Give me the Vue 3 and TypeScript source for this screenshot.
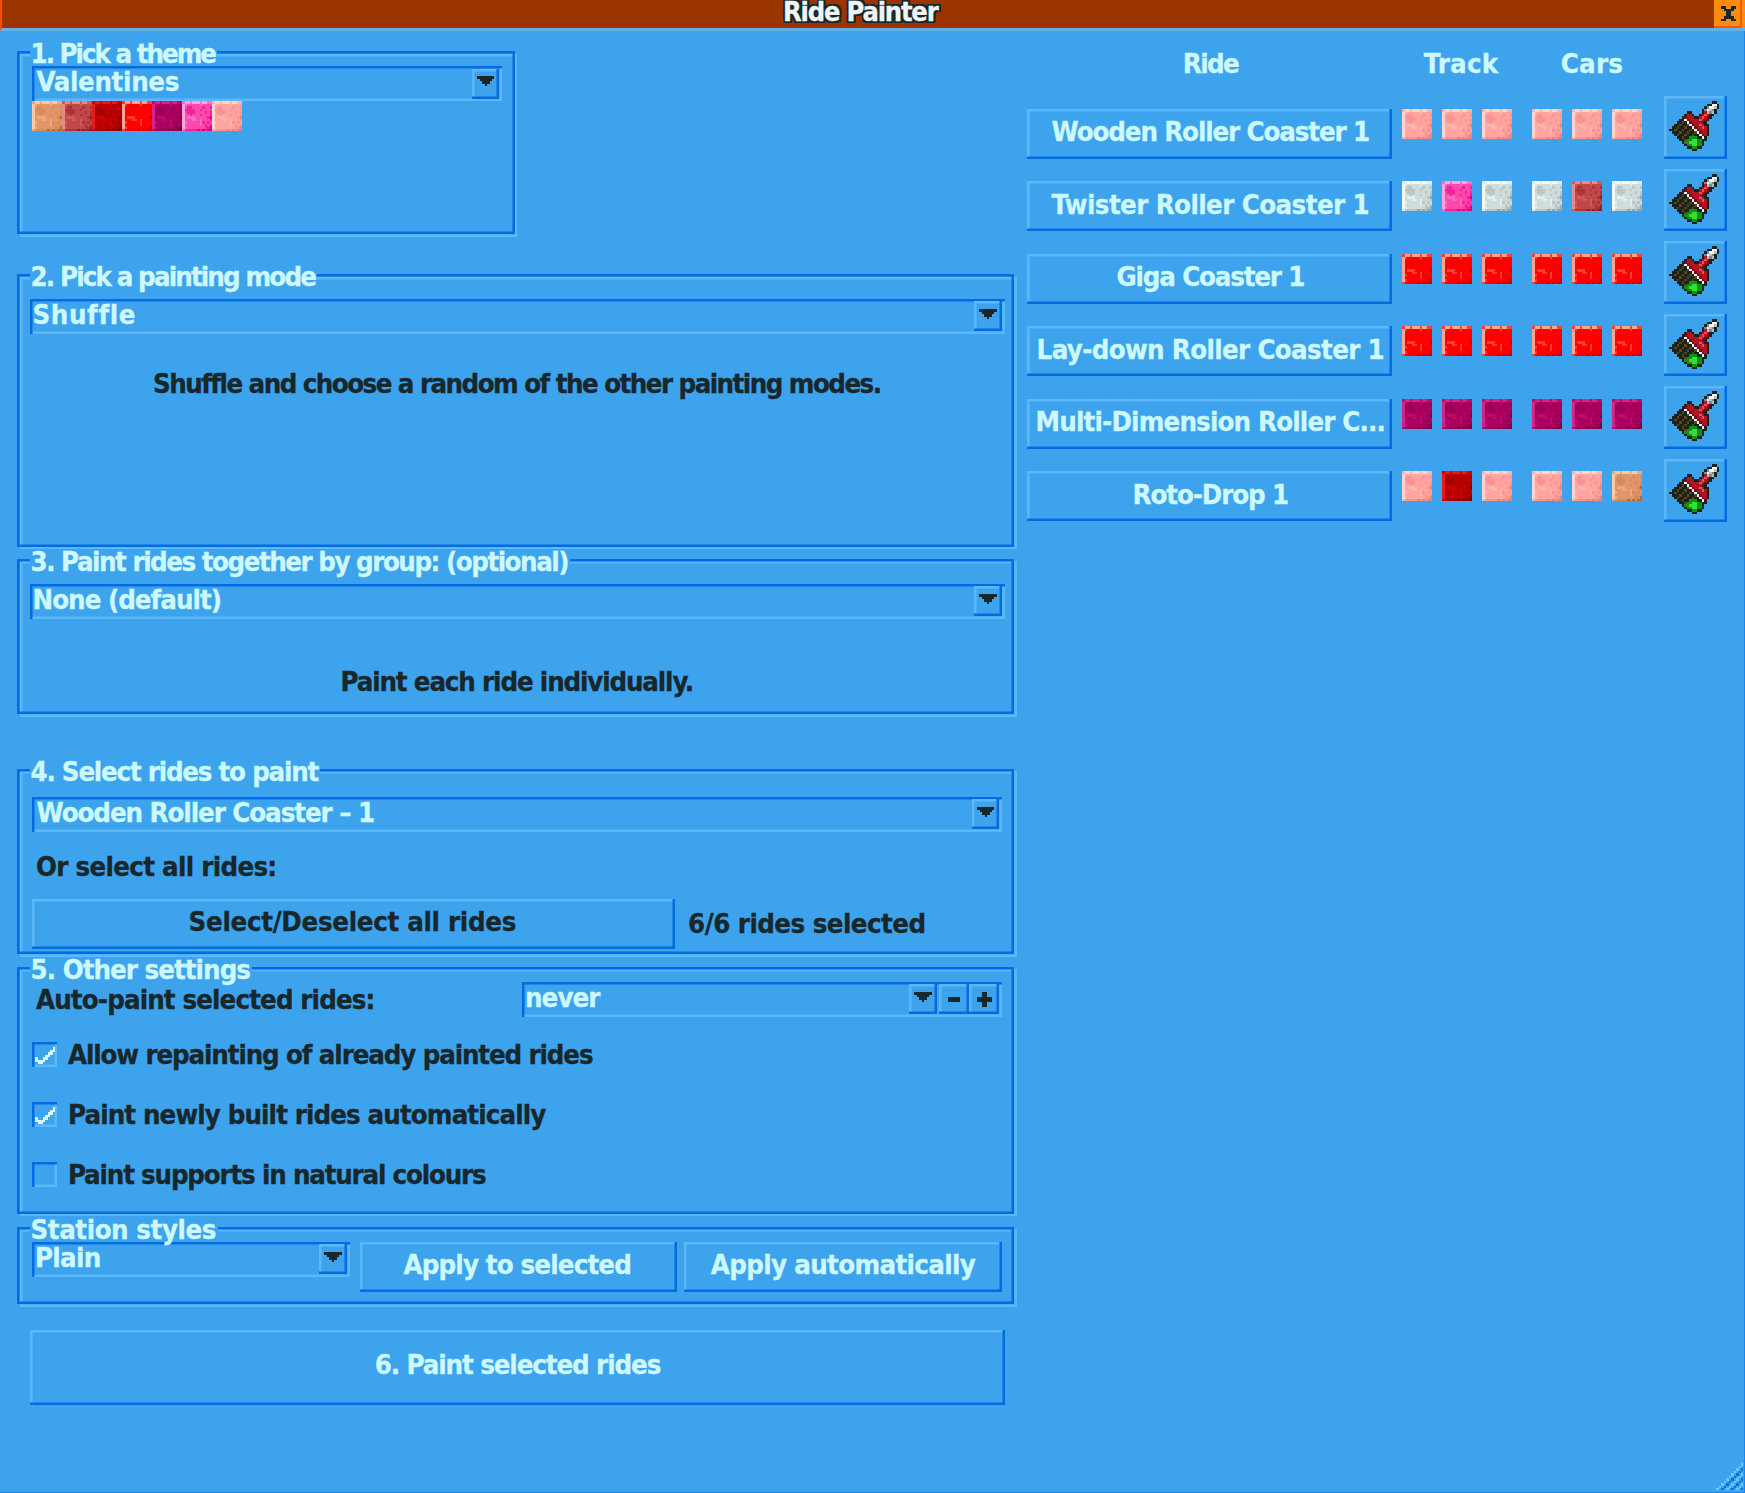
<script setup lang="ts">
import { defineComponent, h } from 'vue'

type Shades = [string, string, string, string, string]

// Shades run from highlight to deepest shadow.
const paints: Record<string, Shades> = {
  tan: ['#fbc9a4', '#eaaa7e', '#e09668', '#d98a5c', '#b8683f'],
  rose: ['#e58a8a', '#cc5c5c', '#c04848', '#ab3438', '#8c2228'],
  crimson: ['#e01c1c', '#c80404', '#bc0000', '#a40000', '#7c0000'],
  red: ['#ffa494', '#ff3c30', '#ff0000', '#f60000', '#cc0000'],
  purple: ['#d4248c', '#b80c68', '#ac0060', '#980054', '#780040'],
  pink: ['#ffa4dc', '#ff6cc0', '#ff48ac', '#f4209c', '#cc0c7c'],
  salmon: ['#ffd4d0', '#ffb4ac', '#ffa4a0', '#fa9490', '#e68480'],
  white: ['#f4f8f8', '#e4ecec', '#d0dcdc', '#b8c6c6', '#98a8a8'],
}

const swatchRows = [
  '100100010011',
  '012222212222',
  '023322223223',
  '033332232222',
  '023332222323',
  '022322232223',
  '021112222234',
  '022211212223',
  '012222213232',
  '022222212323',
  '012222222334',
  '133333434344',
]

const brushRows = [
  '.................KK.',
  '...............KKWWK',
  '..............KgWWGK',
  '.............KgWGgK.',
  '.......KK....KRGgGK.',
  '......KRRK..KRPRKK..',
  '.....KDRRRKKRPRDK...',
  '....KKWDRRRRPRDK....',
  '...KKBKWDRRRRDK.....',
  '..KKBKKBWDRRPRKK....',
  '.KKBKKBKKWDRRPRK....',
  'KKBKKBKKBKWDRRRK....',
  '.KKKBKKBKKBWDRRK....',
  '..KBKKBKKBKKWDRK....',
  '...KKBKKNNNKKWK.....',
  '....KKBNNLLNNKK.....',
  '.....KNNLLLNNK......',
  '......KNNLLNNK......',
  '.......KKNNKK.......',
  '.........KK.........',
]
const brushInk: Record<string, string> = {
  K: '#17231f', W: '#f0f4f4', G: '#b4c0c0', g: '#7c8c8c', R: '#b01420',
  P: '#e45460', D: '#780c14', B: '#63400f', N: '#0a9410', L: '#38dc3c',
}

const arrowRows = ['KKKKKKK', '.KKKKK.', '..KKK..', '...K...']
const tickRows = ['.......W', '......WW', '.....WW.', '....WW..', 'W..WW...', 'WWWW....', '.WW.....']
const closeRows = ['KK..KK', '.KKKK.', '..KK..', '..KK..', '.KKKK.', 'KK..KK']
const minusRows = ['KKKKK', 'KKKKK']
const plusRows = ['..KK..', '..KK..', 'KKKKKK', 'KKKKKK', '..KK..', '..KK..']
const lineInk = { K: '#17272b', W: '#d8f8ff' }

const gripRows = Array.from({ length: 11 }, (_, r) =>
  Array.from({ length: 11 }, (_, c) => {
    const s = c + r - 10
    return s < 0 || s % 2 ? '.' : s % 4 ? 'D' : 'L'
  }).join(''),
)
const gripInk = { L: '#6cc8fc', D: '#0a70e4' }

const Sprite = defineComponent({
  props: {
    rows: { type: Array as () => string[], required: true },
    ink: { type: Object as () => Record<string, string>, required: true },
  },
  setup(props) {
    return () => {
      const w = props.rows[0].length
      const cells = props.rows.flatMap((row, y) =>
        [...row].flatMap((c, x) =>
          props.ink[c] ? [h('rect', { x, y, width: 1, height: 1, fill: props.ink[c] })] : [],
        ),
      )
      return h(
        'svg',
        {
          width: w * 2.5,
          height: props.rows.length * 2.5,
          viewBox: `0 0 ${w} ${props.rows.length}`,
          'shape-rendering': 'crispEdges',
          style: 'display:block;flex:none',
        },
        cells,
      )
    }
  },
})

const shadeInk = (name: string) =>
  Object.fromEntries(paints[name].map((c, i) => [String(i), c])) as Record<string, string>

// Tracks a label's letters so that it takes up the given width.
const vFit = {
  mounted(el: HTMLElement, { value }: { value: number }) {
    const n = (el.textContent ?? '').length
    const natural = el.getBoundingClientRect().width
    el.style.letterSpacing = `${(value + 1.5 - natural) / n}px`
  },
}

const theme = ['tan', 'rose', 'crimson', 'red', 'purple', 'pink', 'salmon']

const rides = [
  { name: 'Wooden Roller Coaster 1', w: 316, track: ['salmon', 'salmon', 'salmon'], cars: ['salmon', 'salmon', 'salmon'] },
  { name: 'Twister Roller Coaster 1', w: 316, track: ['white', 'pink', 'white'], cars: ['white', 'rose', 'white'] },
  { name: 'Giga Coaster 1', w: 186, track: ['red', 'red', 'red'], cars: ['red', 'red', 'red'] },
  { name: 'Lay-down Roller Coaster 1', w: 346, track: ['red', 'red', 'red'], cars: ['red', 'red', 'red'] },
  { name: 'Multi-Dimension Roller C...', w: 348, track: ['purple', 'purple', 'purple'], cars: ['purple', 'purple', 'purple'] },
  { name: 'Roto-Drop 1', w: 154, track: ['salmon', 'crimson', 'salmon'], cars: ['salmon', 'salmon', 'tan'] },
]

const options = [
  { text: 'Allow repainting of already painted rides', w: 523, on: true },
  { text: 'Paint newly built rides automatically', w: 476, on: true },
  { text: 'Paint supports in natural colours', w: 416, on: false },
]
</script>

<template>
  <div class="window">
    <header class="titlebar">
      <h1 class="title"><span v-fit="153">Ride Painter</span></h1>
      <div class="close"><Sprite :rows="closeRows" :ink="lineInk" /></div>
    </header>

    <main class="body">
      <section class="left">
        <div class="group theme">
          <div class="legend"><span v-fit="183">1. Pick a theme</span></div>
          <div class="drop">
            <div class="value"><span v-fit="141">Valentines</span></div>
            <div class="btn knob"><Sprite :rows="arrowRows" :ink="lineInk" /></div>
          </div>
          <div class="palette">
            <Sprite v-for="p in theme" :key="p" :rows="swatchRows" :ink="shadeInk(p)" />
          </div>
        </div>

        <div class="group mode">
          <div class="legend"><span v-fit="283">2. Pick a painting mode</span></div>
          <div class="drop wide">
            <div class="value"><span v-fit="102">Shuffle</span></div>
            <div class="btn knob"><Sprite :rows="arrowRows" :ink="lineInk" /></div>
          </div>
          <p class="note"><span v-fit="726">Shuffle and choose a random of the other painting modes.</span></p>
        </div>

        <div class="group together">
          <div class="legend"><span v-fit="536">3. Paint rides together by group: (optional)</span></div>
          <div class="drop wide">
            <div class="value"><span v-fit="187">None (default)</span></div>
            <div class="btn knob"><Sprite :rows="arrowRows" :ink="lineInk" /></div>
          </div>
          <p class="note low"><span v-fit="351">Paint each ride individually.</span></p>
        </div>

        <div class="group select">
          <div class="legend"><span v-fit="286">4. Select rides to paint</span></div>
          <div class="drop">
            <div class="value"><span v-fit="336">Wooden Roller Coaster – 1</span></div>
            <div class="btn knob"><Sprite :rows="arrowRows" :ink="lineInk" /></div>
          </div>
          <div class="label"><span v-fit="239">Or select all rides:</span></div>
          <div class="row all">
            <div class="btn text dark"><span v-fit="326">Select/Deselect all rides</span></div>
            <div class="count"><span v-fit="236">6/6 rides selected</span></div>
          </div>
        </div>

        <div class="group other">
          <div class="legend"><span v-fit="218">5. Other settings</span></div>
          <div class="row auto">
            <div class="autolabel"><span v-fit="337">Auto-paint selected rides:</span></div>
            <div class="drop">
              <div class="value"><span v-fit="73">never</span></div>
              <div class="btn knob"><Sprite :rows="arrowRows" :ink="lineInk" /></div>
              <div class="btn step first"><Sprite :rows="minusRows" :ink="lineInk" /></div>
              <div class="btn step"><Sprite :rows="plusRows" :ink="lineInk" /></div>
            </div>
          </div>
          <div class="options">
            <div v-for="o in options" :key="o.text" class="option">
              <div class="box"><Sprite v-if="o.on" :rows="tickRows" :ink="lineInk" /></div>
              <span v-fit="o.w">{{ o.text }}</span>
            </div>
          </div>
        </div>

        <div class="group station">
          <div class="legend"><span v-fit="184">Station styles</span></div>
          <div class="row styles">
            <div class="drop">
              <div class="value"><span v-fit="64">Plain</span></div>
              <div class="btn knob"><Sprite :rows="arrowRows" :ink="lineInk" /></div>
            </div>
            <div class="btn text"><span v-fit="226">Apply to selected</span></div>
            <div class="btn text"><span v-fit="263">Apply automatically</span></div>
          </div>
        </div>

        <div class="btn paint"><span v-fit="284">6. Paint selected rides</span></div>
      </section>

      <section class="right">
        <div class="heads">
          <div><span v-fit="54">Ride</span></div>
          <div><span v-fit="73">Track</span></div>
          <div><span v-fit="61">Cars</span></div>
        </div>
        <div v-for="r in rides" :key="r.name" class="ride">
          <div class="btn text"><span v-fit="r.w">{{ r.name }}</span></div>
          <div class="colours">
            <Sprite v-for="(p, i) in r.track" :key="i" :rows="swatchRows" :ink="shadeInk(p)" />
          </div>
          <div class="colours cars">
            <Sprite v-for="(p, i) in r.cars" :key="i" :rows="swatchRows" :ink="shadeInk(p)" />
          </div>
          <div class="btn brush"><Sprite :rows="brushRows" :ink="brushInk" /></div>
        </div>
      </section>
    </main>

    <div class="grip"><Sprite :rows="gripRows" :ink="gripInk" /></div>
  </div>
</template>

<style>
body {
  margin: 0;
  background: #3da3ed;
}
</style>

<style scoped>
.window {
  --bg: #3da3ed;
  --lo: #036ce4;
  --hi: #5cb8f8;
  --pale: #ccf8ff;
  --ink: #17272b;
  position: relative;
  box-sizing: border-box;
  width: 1745px;
  height: 1493px;
  overflow: hidden;
  background: var(--bg);
  box-shadow: inset -1px -1px 0 #1c84ea;
  color: var(--pale);
  font: bold 27.4px/30px 'DejaVu Sans Condensed', 'DejaVu Sans', sans-serif;
  font-stretch: condensed;
  font-variant-ligatures: none;
  -webkit-text-stroke: 0.3px currentColor;
  white-space: nowrap;
}
.window * {
  box-sizing: border-box;
}
.titlebar {
  display: flex;
  justify-content: flex-end;
  height: 31px;
  background: #9c3400;
  border-left: 2px solid #ff4800;
  border-bottom: 3px solid #64b2e4;
  position: relative;
}
.title {
  position: absolute;
  left: 781px;
  top: 0;
  margin: 0;
  font: inherit;
  font-size: 27px;
  line-height: 24px;
  color: #f0f4f4;
  text-shadow: 2px 0 #17272b, -2px 0 #17272b, 0 2px #17272b, 0 -2px #17272b,
    2px 2px #17272b, -2px 2px #17272b, 2px -2px #17272b, -2px -2px #17272b;
}
.title span {
  display: inline-block;
}
.close {
  display: flex;
  align-items: center;
  justify-content: center;
  width: 28px;
  height: 28px;
  margin-right: 3px;
  padding-bottom: 1px;
  background: #ff8c0c;
  box-shadow: inset -2px -2px 0 #ff5400, 3px 0 0 #ff8c0c;
}
.body {
  display: flex;
}
.left {
  flex: none;
  width: 1027px;
  padding-left: 17px;
}
.btn {
  display: flex;
  flex: none;
  justify-content: center;
  box-shadow: inset -2.5px -2.5px 0 var(--lo), inset 2.5px 2.5px 0 var(--hi);
}
.text {
  height: 50px;
  padding-top: 8.5px;
}
.dark {
  color: var(--ink);
}
.group {
  position: relative;
  display: flex;
  flex-direction: column;
  width: 997px;
  padding-left: 15px;
}
.group::before,
.group::after {
  content: '';
  position: absolute;
  pointer-events: none;
}
.group::before {
  inset: 2.5px -2.5px -2.5px 2.5px;
  box-shadow: inset 0 0 0 2.5px var(--hi);
}
.group::after {
  inset: 0;
  box-shadow: inset 0 0 0 2.5px var(--lo);
}
.legend {
  position: absolute;
  z-index: 1;
  left: 12.5px;
  top: -12px;
  padding: 0 1.5px 0 1px;
  background: linear-gradient(var(--bg), var(--bg)) 0 10px / 100% 9px no-repeat;
}
.theme { width: 497.5px; height: 183px; margin-top: 20px; padding-top: 15px; }
.mode { height: 272.5px; margin-top: 40px; padding: 24.7px 0 0 12.5px; }
.together { height: 155.8px; margin-top: 12.2px; padding: 25.3px 0 0 12.5px; }
.select { height: 185.5px; margin-top: 54.5px; padding-top: 28px; }
.other { height: 247.3px; margin-top: 12.2px; padding-top: 15.3px; }
.station { height: 77.5px; margin-top: 13px; padding-top: 15px; }

.drop {
  display: flex;
  flex: none;
  width: 970px;
  height: 35px;
  padding: 2.5px 3px 0 3px;
  box-shadow: inset 2.5px 2.5px 0 var(--lo), inset -2.5px -2.5px 0 var(--hi);
}
.theme .drop { width: 470px; }
.drop.wide { width: 975px; }
.value {
  flex: 1;
  margin-top: -1.5px;
}
.theme .value,
.select .value {
  padding-left: 1.5px;
}
.knob {
  width: 27.5px;
  height: 30px;
  padding-top: 7.5px;
}
.palette {
  display: flex;
}
.note {
  margin: 35.5px 10px 0 0;
  color: var(--ink);
  text-align: center;
}
.note.low { margin-top: 48px; }
.label {
  margin: 20.5px 0 0 4px;
  color: var(--ink);
}
.row {
  display: flex;
}
.all { margin-top: 16.5px; }
.all .btn { width: 642.6px; padding-right: 2px; }
.count {
  margin: 10.5px 0 0 13.5px;
  color: var(--ink);
}
.auto .drop { width: 480px; }
.autolabel {
  width: 490px;
  margin-top: 3px;
  padding-left: 4px;
  color: var(--ink);
}
.step {
  align-items: center;
  width: 30px;
  height: 30px;
}
.step.first { margin-left: 2.5px; }
.options {
  margin-top: 23.5px;
  color: var(--ink);
}
.option {
  display: flex;
  height: 60px;
}
.box {
  width: 25px;
  height: 25px;
  margin: 1.5px 11px 0 0;
  padding: 5px 0 0 2.5px;
  box-shadow: inset 2.5px 2.5px 0 var(--lo), inset -2.5px -2.5px 0 var(--hi);
}
.styles .drop { width: 317.5px; }
.styles .text { width: 317.5px; margin-left: 10px; padding-right: 2px; }
.styles .text + .text { width: 318px; margin-left: 7px; padding-right: 0; }
.paint {
  width: 975px;
  height: 75.3px;
  margin: 25.2px 0 0 12.5px;
  padding: 20.5px 0 0 1px;
}
.right {
  flex: none;
  width: 701px;
}
.heads {
  display: flex;
  margin: 18px 0 17px;
  text-align: center;
}
.heads div:nth-child(1) { width: 367px; }
.heads div:nth-child(2) { width: 110px; margin-left: 12px; }
.heads div:nth-child(3) { width: 110px; margin-left: 21px; }
.ride {
  display: flex;
  align-items: flex-start;
  height: 72.6px;
}
.ride .text {
  width: 364.7px;
  margin-top: 12.5px;
  padding-left: 2px;
}
.colours {
  display: flex;
  gap: 10px;
  margin: 12.5px 0 0 10.3px;
}
.colours.cars { margin-left: 20px; }
.brush {
  width: 63px;
  height: 62.7px;
  margin-left: 22px;
  padding: 5px 2px 0 0;
}
.grip {
  position: absolute;
  right: 2px;
  bottom: 3px;
}
</style>
